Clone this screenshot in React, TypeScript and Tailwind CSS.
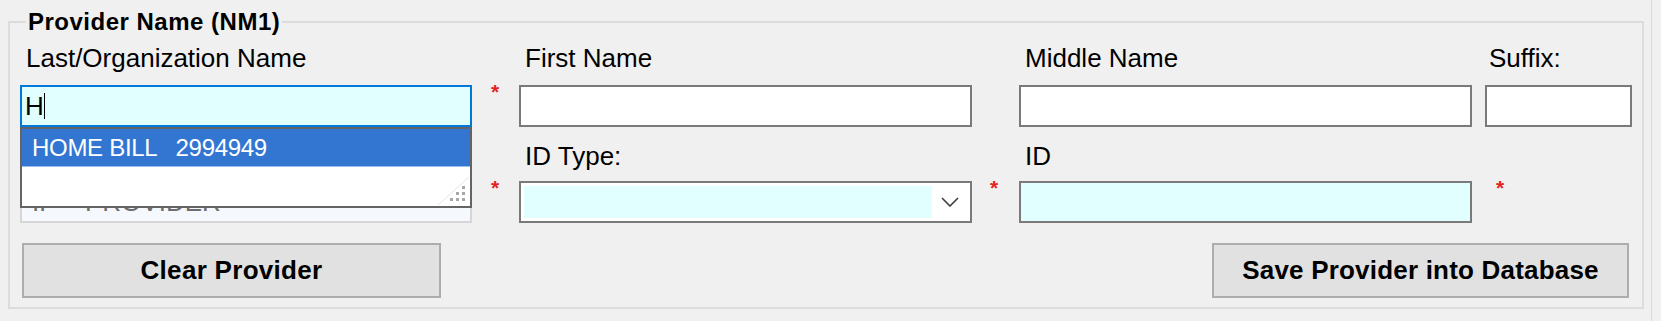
import React from 'react';

const COLS = 'grid grid-cols-[452px_47px_453px_47px_453px_13px_147px]';

const Star: React.FC<{ className?: string }> = ({ className = '' }) => (
  <div className={`text-[21px] font-bold leading-[14px] text-[#e52222] ${className}`}>*</div>
);

const TextBox: React.FC<{ cyan?: boolean }> = ({ cyan }) => (
  <div className={`h-[42px] border-2 border-[#7a7a7a] ${cyan ? 'bg-[#e1ffff]' : 'bg-white'}`} />
);

const Grip: React.FC = () => (
  <svg width="34" height="30" viewBox="0 0 34 30" className="absolute right-0 bottom-0">
    <path d="M2 29 L33 1" stroke="#e4e4e4" strokeWidth="1" />
    <rect x="26" y="10" width="3" height="3" fill="#a8a8a8" />
    <rect x="20" y="16" width="3" height="3" fill="#a8a8a8" />
    <rect x="26" y="16" width="3" height="3" fill="#a8a8a8" />
    <rect x="14" y="22" width="3" height="3" fill="#a8a8a8" />
    <rect x="20" y="22" width="3" height="3" fill="#a8a8a8" />
    <rect x="26" y="22" width="3" height="3" fill="#a8a8a8" />
  </svg>
);

const App: React.FC = () => {
  return (
    <div className="w-[1661px] h-[321px] bg-[#f0f0f0] font-['Liberation_Sans',Arial,sans-serif] text-black overflow-hidden">
      <div className="w-[1652px] h-full border-r border-[#d9d9d9] pt-[7px] pl-[8px]">
        <fieldset className="w-[1636px] border-2 border-[#dcdcdc] px-[10px] pb-[9px]">
          <legend className="ml-[6px] px-[2px] text-[24px] font-bold leading-[30px] tracking-[0.5px]">
            Provider Name (NM1)
          </legend>

          {/* labels row 1 */}
          <div className={`${COLS} mt-[6px] h-[30px] text-[26px] leading-[30px]`}>
            <div className="pl-[6px]">Last/Organization Name</div>
            <div />
            <div className="pl-[6px]">First Name</div>
            <div />
            <div className="pl-[6px]">Middle Name</div>
            <div />
            <div className="pl-[4px]">Suffix:</div>
          </div>

          {/* inputs row 1 */}
          <div className={`${COLS} mt-[12px]`}>
            <div className="relative">
              <div className="h-[42px] border-2 border-[#0078d7] bg-[#e1ffff] pl-[3px] flex items-center text-[26px] leading-none">
                <span>H</span>
                <span className="w-px h-[26px] bg-black" />
              </div>
              <div className="absolute left-0 top-[42px] z-10 w-full h-[81px] border-2 border-[#646464] bg-white">
                <div className="h-[38px] bg-[#3276d2] border-b border-[#9cc0ee] pl-[10px] flex items-center text-[24px] tracking-[-0.3px] text-white whitespace-pre">
                  HOME BILL   2994949
                </div>
                <Grip />
              </div>
            </div>
            <Star className="pl-[19px]" />
            <TextBox />
            <div />
            <TextBox />
            <div />
            <TextBox />
          </div>

          {/* labels row 2 */}
          <div className={`${COLS} mt-[14px] h-[30px] text-[26px] leading-[30px]`}>
            <div />
            <div />
            <div className="pl-[6px]">ID Type:</div>
            <div />
            <div className="pl-[6px]">ID</div>
            <div />
            <div />
          </div>

          {/* inputs row 2 */}
          <div className={`${COLS} mt-[10px]`}>
            <div className="h-[42px] border-2 border-[#d6d6d6] bg-[#f5f8fd] pl-[10px] flex items-center text-[26px] text-[#6d6d6d] whitespace-pre">
              IP    PROVIDER
            </div>
            <Star className="pl-[19px]" />
            <div className="h-[42px] border-2 border-[#7a7a7a] bg-white flex items-stretch p-[3px]">
              <div className="w-[408px] bg-[#e1ffff]" />
              <div className="flex-1 flex items-center justify-center">
                <svg width="18" height="10" viewBox="0 0 18 10">
                  <path d="M1 1 L9 9 L17 1" fill="none" stroke="#3c3c3c" strokeWidth="1.6" />
                </svg>
              </div>
            </div>
            <Star className="pl-[18px]" />
            <TextBox cyan />
            <div />
            <Star className="pl-[11px]" />
          </div>

          {/* buttons */}
          <div className="flex justify-between mt-[20px] w-[1612px]">
            <button className="ml-[2px] w-[419px] h-[55px] border-2 border-[#adadad] bg-[#e1e1e1] text-[26px] font-bold tracking-[0.3px]">
              Clear Provider
            </button>
            <button className="mr-[3px] w-[417px] h-[55px] border-2 border-[#adadad] bg-[#e1e1e1] text-[26px] font-bold tracking-[0.2px]">
              Save Provider into Database
            </button>
          </div>
        </fieldset>
      </div>
    </div>
  );
};

export default App;
